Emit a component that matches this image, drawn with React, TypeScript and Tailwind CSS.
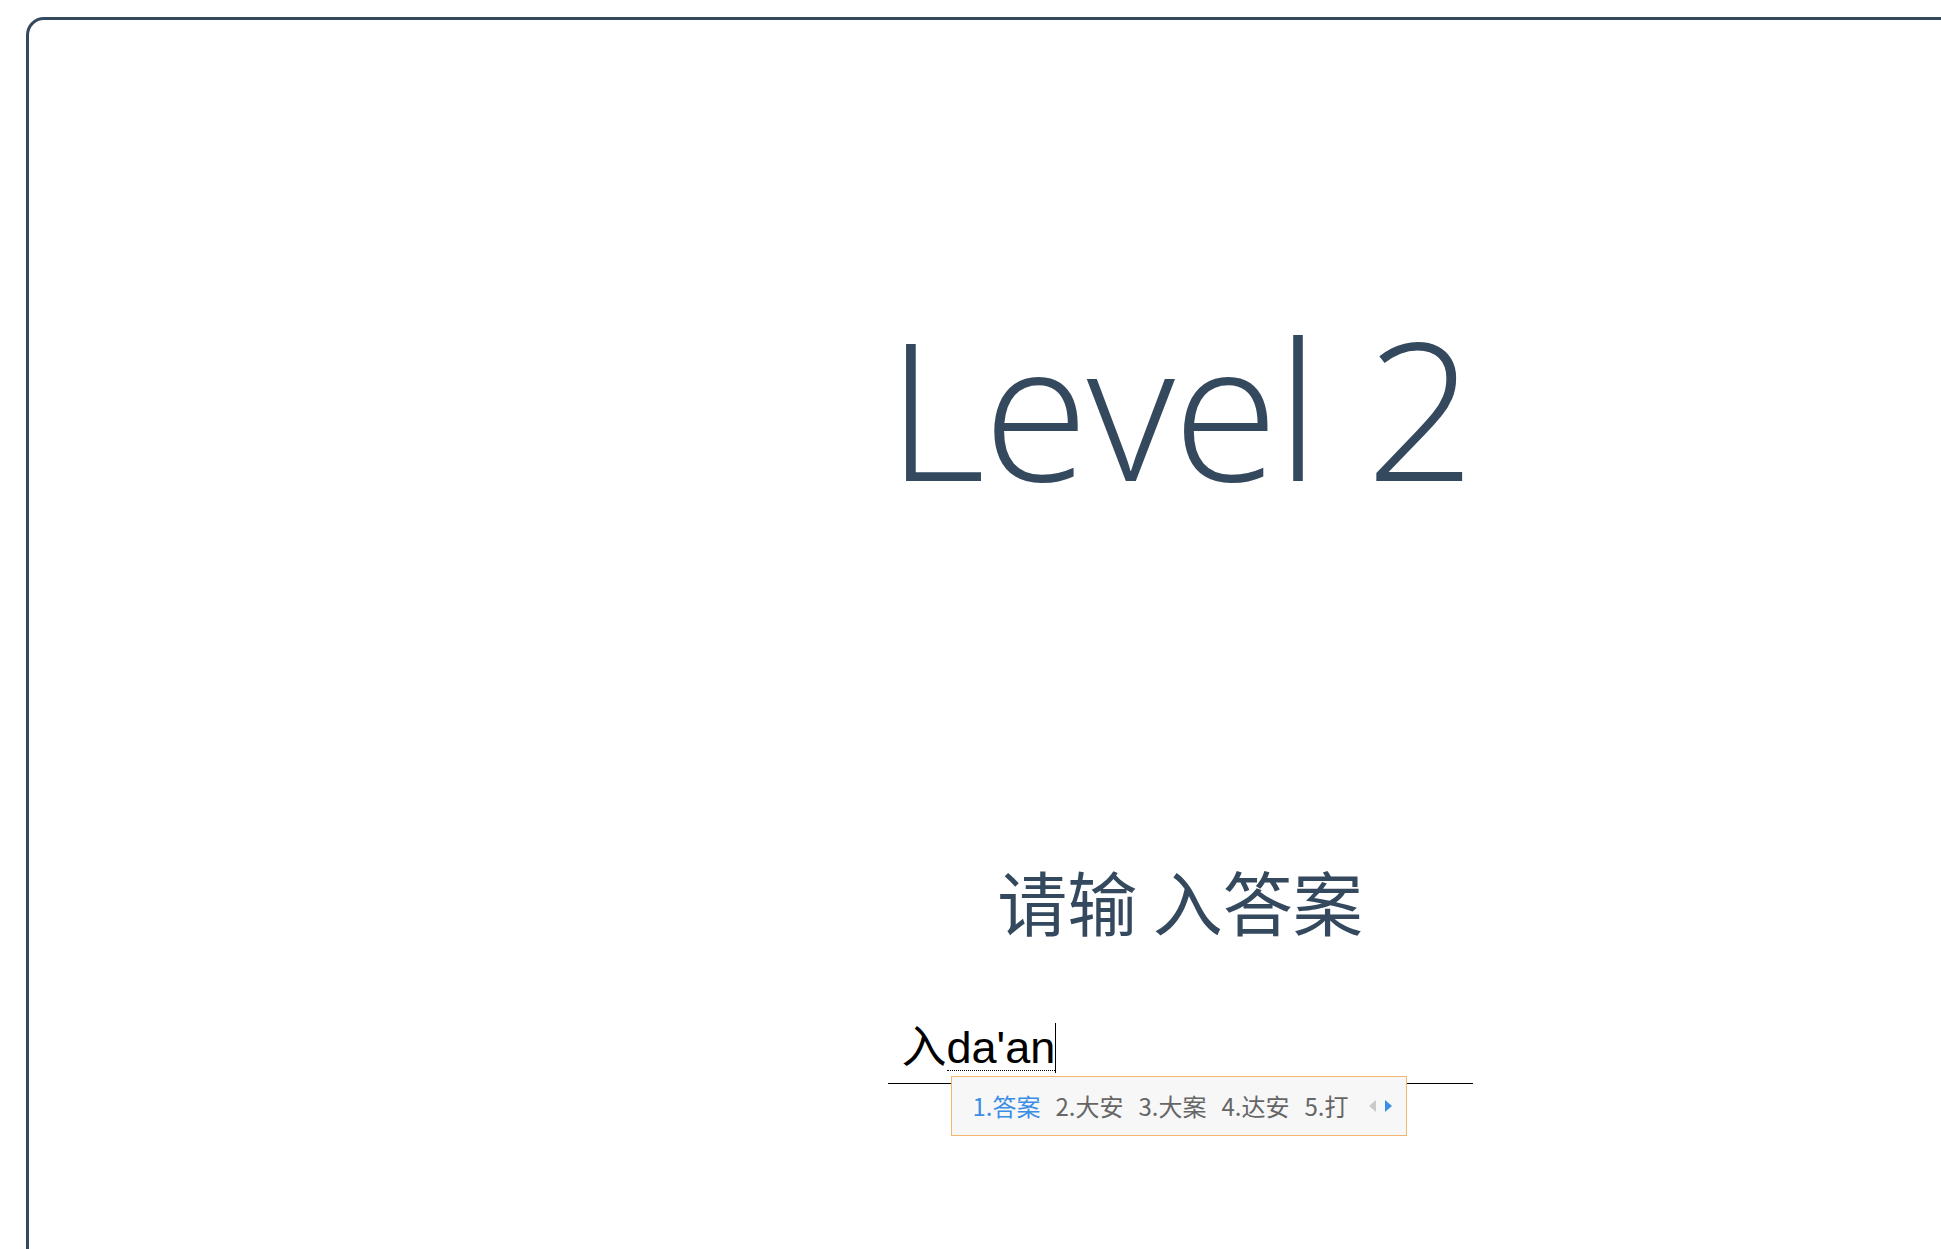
import React from "react";

const candidates = ["1.答案", "2.大安", "3.大案", "4.达安", "5.打"];

export default function App() {
  return (
    <div className="w-[1941px] h-[1249px] overflow-hidden bg-white">
      <div className="ml-[26px] mt-[17px] w-[2308px] h-[1400px] border-[3px] border-[#34495e] rounded-[18px] flex flex-col items-center">
        <h1
          className="mt-[291px] text-[192px] leading-none font-light text-[#34495e] tracking-[-2px]"
          style={{ fontFamily: '"Open Sans", sans-serif' }}
        >
          Level 2
        </h1>
        <h2
          className="mt-[363px] text-[70px] leading-none text-[#34495e]"
          style={{ fontFamily: '"Noto Sans CJK SC", sans-serif' }}
        >
          请输 入答案
        </h2>
        <div className="relative mt-[86px] w-[585px] border-b border-black pl-[14px] pb-[9px]">
          <div
            className="flex items-center h-[52px] text-[45px] leading-[52px] text-black"
            style={{ fontFamily: '"Liberation Sans", "Noto Sans CJK SC", sans-serif' }}
          >
            <span>入</span>
            <span className="border-b border-dotted border-black leading-[45px]">da'an</span>
            <span className="inline-block w-px h-[50px] bg-black"></span>
          </div>
          <div
            className="absolute left-[63px] top-[54px] w-[456px] h-[60px] border border-[#f2b66e] bg-[#f7f7f7] flex items-center pl-[21px] text-[24px] leading-none"
            style={{ fontFamily: '"Noto Sans CJK SC", sans-serif' }}
          >
            <div className="flex items-center gap-[15px]">
              {candidates.map((c, i) => (
                <span key={c} className={i === 0 ? "text-[#3a8ee6]" : "text-[#666666]"}>
                  {c}
                </span>
              ))}
            </div>
            <div className="flex items-center gap-[9px] ml-[20px]">
              <svg width="7" height="12" viewBox="0 0 7 12">
                <path d="M7 0 L0 6 L7 12 Z" fill="#cacaca" />
              </svg>
              <svg width="7" height="12" viewBox="0 0 7 12">
                <path d="M0 0 L7 6 L0 12 Z" fill="#3a8ee6" />
              </svg>
            </div>
          </div>
        </div>
      </div>
    </div>
  );
}
